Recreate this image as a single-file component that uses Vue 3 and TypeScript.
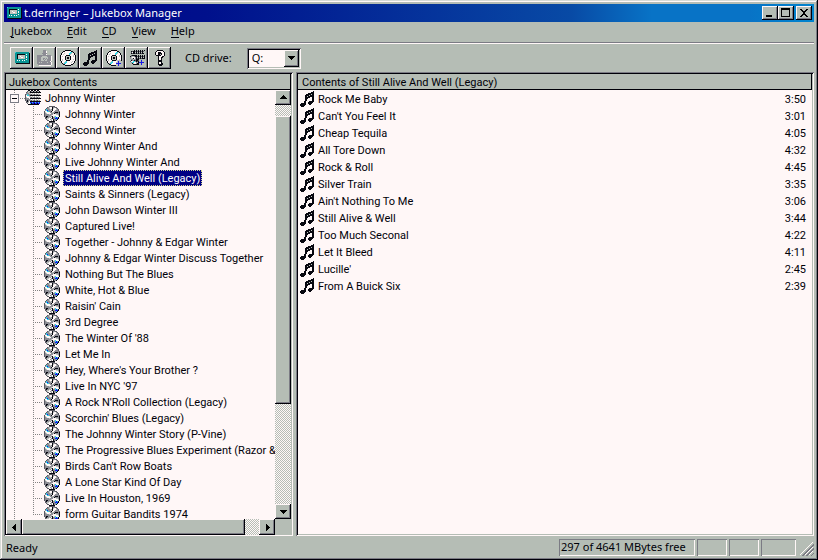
<script setup lang="ts">
import { ref } from 'vue'

interface Layer {
  color: string
  d: string
}

interface Track {
  title: string
  length: string
}

const palette: Record<string, string> = {
  k: '#080810',
  d: '#5a5a63',
  g: '#8c8c94',
  l: '#bdc3bd',
  w: '#fff7f7',
  c: '#31d6e7',
  t: '#089494',
  b: '#1818e7',
}

// Turns rows of palette letters into one path per colour.
function layers(rows: string[]): Layer[] {
  const paths: Record<string, string> = {}
  rows.forEach((row, y) => {
    Array.from(row).forEach((key, x) => {
      if (key !== '.') paths[key] = (paths[key] ?? '') + `M${x} ${y}h1v1h-1z`
    })
  })
  return Object.entries(paths).map(([key, d]) => ({ color: palette[key], d }))
}

const sprites: Record<string, Layer[]> = {
  player: layers([
    '................',
    '................',
    '.cttttttttttttt.',
    '.ttttttttttttttk',
    '.ttkkkkkkkktwttk',
    '.ttklllllllttttk',
    '.ttkllwlllltwttk',
    '.ttklllwwlltwttk',
    '.ttklllllllttttk',
    '.tttttttttttwttk',
    '.ttwtwttwtwttttk',
    '.ttttttttttttttk',
    '.ttttttttttttttk',
    '..kkkkkkkkkkkkkk',
    '................',
    '................',
  ]),
  load: layers([
    '......ggg.......',
    '......gggw......',
    '......gggw......',
    '.....ggggg......',
    '......gggw......',
    'gggggggggggggg..',
    'ggggglllllggggw.',
    'gggglllllllgggw.',
    'ggggllgglglgggw.',
    'ggggllglglggggw.',
    'gggglllgllggggw.',
    'gggggggggggggw..',
    'gglglggggglgggw.',
    'ggggggggggggggw.',
    '.gggggggggggggw.',
    '..wwwwwwwwwwww..',
  ]),
  cd: layers([
    '.....kkkkkk.....',
    '...kkwwwwwwkk...',
    '..kwwwwwwwcclk..',
    '.kwwlwwwwcclwwk.',
    '.kwlwwwwwclwwwk.',
    'kwwwwwkkkkwwwlwk',
    'kwlwwkllllkwwlwk',
    'kwwwwklkklkwwwwk',
    'kwwwwklkklkwwwwk',
    'kwlwwkllllkwwlwk',
    'kwlwwwkkkkwwwwwk',
    '.kwwwlcwwwwwlwk.',
    '.kwwlccwwwwlwwk.',
    '..klccwwwwwwwk..',
    '...kkwwwwwwkk...',
    '.....kkkkkk.....',
  ]),
  addCd: layers([
    '.....kkkkkk.....',
    '...kkwwwwwwkk...',
    '..kwwwwwwwcclk..',
    '.kwwlwwwwcclwwk.',
    '.kwlwwwwwclwwwk.',
    'kwwwwwkkkkwwwlwk',
    'kwlwwkllllkwwlwk',
    'kwwwwklkklkwwwwk',
    'kwwwwklkklkwwwwk',
    'kwlwwkllllkwwlwk',
    'kwlwwwkkkklllllk',
    '.kwwwlcwwwwlbll.',
    '.kwwlccwwwllbll.',
    '..klccwwwwbbbbb.',
    '...kkwwwwwllbll.',
    '.....kkkkkl.b...',
  ]),
  note: layers([
    '.............k..',
    '...........kkk..',
    '........kkkkkk..',
    '......kkkkklkk..',
    '.....kkkklkkkk..',
    '.....kklkkkkkk..',
    '.....kkkkk..kk..',
    '.....kkk....kk..',
    '.....kk.....kk..',
    '.....kk.....kk..',
    '....kk...kkkkk..',
    '....kk..kkkkk...',
    '.kkkkk..kkkk....',
    'kkkkkk...kk.....',
    'kkkkk...........',
    '.kkk............',
  ]),
  disc: layers([
    '.....dddddd.....',
    '...dglwwkggdd...',
    '..dgglwwklwwgd..',
    '.dcggglgkwwwlgd.',
    '.gcbggglkwwgggd.',
    'dwwccggkwwgggggd',
    'dlwwwwgglggkkkgk',
    'dglwwwwgglkggggk',
    'dgggglgggwwwllgk',
    'dgggggglwwwwwwlk',
    'dgkkgglgkwlcwwwk',
    '.dkgglgwkggcbck.',
    '.dgllwwgkggbbbk.',
    '..dlwwglwkggck..',
    '...ddwwgwkggk...',
    '.....kkkkkk.....',
  ]),
  changer: layers([
    '...kk.kk.kk.kk..',
    '..dllkglkglkglk.',
    '.dglgkkkkkkkkkkk',
    '.gggllwlwlwlwlw.',
    'dgcgggdlgdlgdlg.',
    'dwccgkkkkkkkkkkk',
    'dwwwllwlwlwlwlw.',
    'dlwwwgdlgdlgdlg.',
    'dgggwkkkkkkkkkkk',
    'dgggglwlwlwlwlw.',
    'dgkgggdlgdlgdlg.',
    '.dkgwkkkkkkkkkkk',
    '.dglwbbcbbcbbcb.',
    '..dwwckbbkbbkbb.',
    '...kkkkkkkkkkk..',
    '................',
  ]),
  addChanger: layers([
    '.....k.k.k.k.k.k',
    '..kdkkdkdkdkdkd.',
    '..dwkklklklklkl.',
    '..kdkkdkdkdkdkk.',
    '................',
    '..dkkkkk.k.k.k.k',
    '.kgllgkkdkdkdkdk',
    '.glwwwgklklklklk',
    '.gllkwgkdkdkdkkk',
    '..gglggkkk......',
    '..kggkdkkd..b...',
    '.dwwccgkdk..b...',
    '..gccwwglkbbbbb.',
    '...klwwgkk..b...',
    '....kkkkkk..b...',
    '................',
  ]),
  help: layers([
    '.....kkkkkk.....',
    '....kwwwwwwk....',
    '...kwwkkkwwwk...',
    '...kwwkkkkwwk...',
    '...kwwkk.kwwk...',
    '....kkkkkwwwk...',
    '......kwwwkk....',
    '......kwwkk.....',
    '......kwwk......',
    '......kwwk......',
    '......kkkk......',
    '......kkkk......',
    '......kwwk......',
    '......kwwkk.....',
    '......kkkkk.....',
    '.......kkk......',
  ]),
}

const menus = ['Jukebox', 'Edit', 'CD', 'View', 'Help']

const tools = [
  { sprite: 'player', label: 'Jukebox' },
  { sprite: 'load', label: 'Load disc' },
  { sprite: 'cd', label: 'Disc' },
  { sprite: 'note', label: 'Play track' },
  { sprite: 'addCd', label: 'Add disc' },
  { sprite: 'addChanger', label: 'Add group' },
  { sprite: 'help', label: 'About' },
]

const albums = [
  'Johnny Winter',
  'Second Winter',
  'Johnny Winter And',
  'Live Johnny Winter And',
  'Still Alive And Well (Legacy)',
  'Saints & Sinners (Legacy)',
  'John Dawson Winter III',
  'Captured Live!',
  'Together - Johnny & Edgar Winter',
  'Johnny & Edgar Winter Discuss Together',
  'Nothing But The Blues',
  'White, Hot & Blue',
  "Raisin' Cain",
  '3rd Degree',
  "The Winter Of '88",
  'Let Me In',
  "Hey, Where's Your Brother ?",
  "Live In NYC '97",
  "A Rock N'Roll Collection (Legacy)",
  "Scorchin' Blues (Legacy)",
  'The Johnny Winter Story (P-Vine)',
  'The Progressive Blues Experiment (Razor & Tie)',
  "Birds Can't Row Boats",
  'A Lone Star Kind Of Day',
  'Live In Houston, 1969',
  'form Guitar Bandits 1974',
]

const tracks: Track[] = [
  { title: 'Rock Me Baby', length: '3:50' },
  { title: "Can't You Feel It", length: '3:01' },
  { title: 'Cheap Tequila', length: '4:05' },
  { title: 'All Tore Down', length: '4:32' },
  { title: 'Rock & Roll', length: '4:45' },
  { title: 'Silver Train', length: '3:35' },
  { title: "Ain't Nothing To Me", length: '3:06' },
  { title: 'Still Alive & Well', length: '3:44' },
  { title: 'Too Much Seconal', length: '4:22' },
  { title: 'Let It Bleed', length: '4:11' },
  { title: "Lucille'", length: '2:45' },
  { title: 'From A Buick Six', length: '2:39' },
]

const selected = ref('Still Alive And Well (Legacy)')
const drive = ref('Q:')
</script>

<template>
  <div class="window">
    <svg class="defs" aria-hidden="true">
      <symbol v-for="(parts, name) in sprites" :id="name" :key="name" viewBox="0 0 16 16">
        <path v-for="part in parts" :key="part.color" :fill="part.color" :d="part.d" shape-rendering="crispEdges" />
      </symbol>
    </svg>

    <header class="titlebar">
      <svg class="icon" aria-hidden="true"><use href="#player" /></svg>
      <h1>t.derringer – Jukebox Manager</h1>
      <button class="raised caption" aria-label="Minimize">
        <svg viewBox="0 0 12 10"><path d="M2 7h6v2h-6z" /></svg>
      </button>
      <button class="raised caption" aria-label="Maximize">
        <svg viewBox="0 0 12 10"><path fill-rule="evenodd" d="M1 0h9v9h-9zM2 2v6h7v-6z" /></svg>
      </button>
      <button class="raised caption close" aria-label="Close">
        <svg viewBox="0 0 12 10"><path d="M2 1h2v1h1v1h2v-1h1v-1h2v1h-1v1h-1v1h-1v2h1v1h1v1h1v1h-2v-1h-1v-1h-2v1h-1v1h-2v-1h1v-1h1v-1h1v-2h-1v-1h-1v-1h-1z" /></svg>
      </button>
    </header>

    <nav class="menubar">
      <button v-for="menu in menus" :key="menu"><u>{{ menu[0] }}</u>{{ menu.slice(1) }}</button>
    </nav>

    <div class="toolbar">
      <div class="tools">
        <button v-for="tool in tools" :key="tool.sprite" class="raised tool" :aria-label="tool.label">
          <svg class="icon" aria-hidden="true"><use :href="`#${tool.sprite}`" /></svg>
        </button>
      </div>
      <label for="drive">CD drive:</label>
      <div class="combo">
        <select id="drive" v-model="drive">
          <option>Q:</option>
          <option>R:</option>
        </select>
        <span class="raised drop"><svg viewBox="0 0 7 4"><path d="M0 0h7v1h-1v1h-1v1h-1v1h-1v-1h-1v-1h-1v-1h-1z" /></svg></span>
      </div>
    </div>

    <main>
      <section class="pane contents">
        <h2>Jukebox Contents</h2>
        <div class="scroller">
          <ul class="tree">
            <li>
              <div class="root">
                <button class="toggle" aria-label="Collapse"></button>
                <svg class="icon" aria-hidden="true"><use href="#changer" /></svg>
                <span class="name">Johnny Winter</span>
              </div>
              <ul class="children">
                <li v-for="album in albums" :key="album" class="album">
                  <svg class="icon" aria-hidden="true"><use href="#disc" /></svg>
                  <button class="name" :class="{ selected: album === selected }" @click="selected = album">{{ album }}</button>
                </li>
              </ul>
            </li>
          </ul>
          <div class="track vertical">
            <button class="raised arrow" aria-label="Scroll up"><svg viewBox="0 0 7 7"><path d="M3 1h1v1h1v1h1v1h1v1h-7v-1h1v-1h1v-1h1z" /></svg></button>
            <span class="gap before"></span>
            <span class="raised thumb"></span>
            <span class="gap after"></span>
            <button class="raised arrow" aria-label="Scroll down"><svg viewBox="0 0 7 7"><path d="M0 2h7v1h-1v1h-1v1h-1v1h-1v-1h-1v-1h-1v-1h-1z" /></svg></button>
          </div>
          <div class="track horizontal">
            <button class="raised arrow" aria-label="Scroll left"><svg viewBox="0 0 7 7"><path d="M5 0v7h-1v-1h-1v-1h-1v-1h-1v-1h1v-1h1v-1h1v-1z" /></svg></button>
            <span class="raised thumb"></span>
            <span class="gap end"></span>
            <button class="raised arrow" aria-label="Scroll right"><svg viewBox="0 0 7 7"><path d="M2 0v7h1v-1h1v-1h1v-1h1v-1h-1v-1h-1v-1h-1v-1z" /></svg></button>
          </div>
        </div>
      </section>

      <section class="pane listing">
        <h2>Contents of {{ selected }}</h2>
        <table>
          <tbody>
            <tr v-for="track in tracks" :key="track.title">
              <td class="glyph"><svg class="icon" aria-hidden="true"><use href="#note" /></svg></td>
              <td>{{ track.title }}</td>
              <td class="length">{{ track.length }}</td>
            </tr>
          </tbody>
        </table>
      </section>
    </main>

    <footer class="status">
      <span class="message">Ready</span>
      <span class="cell space">297 of 4641 MBytes free</span>
      <span class="cell"></span>
      <span class="cell"></span>
      <span class="cell wide"></span>
      <svg class="grip" viewBox="0 0 14 14" aria-hidden="true">
        <path class="light" d="M0 13L13 0M5 13L13 5M9 13L13 9" />
        <path class="dark" d="M2 14L14 2M3 14L14 3M7 14L14 7M6 14L14 6M11 14L14 11" />
      </svg>
    </footer>
  </div>
</template>

<style>
body {
  margin: 0;
}
</style>

<style scoped>
.window {
  --face: #b5bdb5;
  --paper: #fff7f7;
  --shade: #7b7b84;
  --ink: #000008;
  --dotted: #848484;
  box-sizing: border-box;
  display: flex;
  flex-direction: column;
  height: 100vh;
  padding: 4px;
  background: var(--face);
  box-shadow: inset -1px -1px var(--ink), inset 1px 1px #d6dad6, inset -2px -2px var(--shade), inset 2px 2px var(--paper);
  color: var(--ink);
  font: 11px/16px Roboto, "Liberation Sans", sans-serif;
}

.defs {
  position: absolute;
  width: 0;
  height: 0;
}

h1,
h2,
ul {
  margin: 0;
  padding: 0;
  font-size: 11px;
  font-weight: 400;
  list-style: none;
}

button,
select {
  margin: 0;
  padding: 0;
  border: 0;
  background: none;
  color: inherit;
  font: inherit;
}

.icon {
  display: block;
  flex: none;
  width: 16px;
  height: 16px;
}

.raised {
  display: flex;
  flex: none;
  align-items: center;
  justify-content: center;
  box-sizing: border-box;
  background: var(--face);
  box-shadow: inset -1px -1px var(--ink), inset 1px 1px var(--paper), inset -2px -2px var(--shade);
}

.titlebar {
  display: flex;
  flex: none;
  align-items: center;
  height: 18px;
  padding: 0 2px;
  background: linear-gradient(90deg, #00008c 0%, #00108c 25%, #084aa5 70%, #0873c6 80%, #0873c6 92%, #0084ce 100%);
  color: #fff;
}

.titlebar h1 {
  flex: 1;
  margin-left: 2px;
  font-family: "Noto Sans", sans-serif;
}

.caption {
  width: 16px;
  height: 14px;
}

.caption svg {
  width: 12px;
  height: 10px;
}

.close {
  margin-left: 2px;
}

.menubar {
  display: flex;
  flex: none;
  gap: 1px;
  height: 20px;
  border-bottom: 1px solid var(--shade);
  box-shadow: 0 1px var(--paper);
  font-family: "Noto Sans", sans-serif;
}

.menubar button {
  padding: 0 7px 2px;
}

.menubar u {
  display: inline-block;
  border-bottom: 1px solid;
  line-height: 13px;
  text-decoration: none;
}

.toolbar {
  display: flex;
  flex: none;
  align-items: center;
  height: 22px;
  padding: 4px 6px 3px;
  font-family: "Noto Sans", sans-serif;
}

.tools {
  display: flex;
}

.tool {
  width: 23px;
  height: 22px;
}

.toolbar label {
  margin: 0 15px 0 14px;
}

.combo {
  display: grid;
  box-sizing: border-box;
  width: 54px;
  height: 21px;
  padding: 2px;
  background: var(--paper);
  box-shadow: inset 1px 1px var(--shade), inset -1px -1px var(--paper), inset 2px 2px var(--ink), inset -2px -2px var(--face);
}

.combo > * {
  grid-area: 1 / 1;
}

.combo select {
  appearance: none;
  padding-left: 3px;
}

.drop {
  justify-self: end;
  width: 15px;
  pointer-events: none;
}

.drop svg {
  width: 7px;
  height: 4px;
}

main {
  display: flex;
  flex: 1;
  gap: 3px;
  min-height: 0;
}

.pane {
  display: flex;
  flex-direction: column;
  box-sizing: border-box;
  padding: 1px 2px;
  background: var(--paper);
  box-shadow: inset 1px 1px var(--shade), inset -1px -1px var(--paper), inset 2px 2px var(--ink), inset -2px -2px var(--face);
}

.contents {
  flex: none;
  width: 289px;
}

.listing {
  flex: 1;
  min-width: 0;
}

.pane h2 {
  flex: none;
  box-sizing: border-box;
  height: 17px;
  padding: 1px 0 0 4px;
  border: 1px solid var(--ink);
  border-left: 0;
  background: var(--face);
  line-height: 15px;
}

.contents h2 {
  padding-left: 3px;
}

.scroller {
  display: grid;
  flex: 1;
  grid-template: minmax(0, 1fr) 16px / minmax(0, 1fr) 16px;
  min-height: 0;
  background: var(--face);
}

.tree {
  overflow: hidden;
  background: repeating-linear-gradient(var(--dotted) 0 1px, transparent 1px 2px) 8px 0 / 1px 100% no-repeat var(--paper);
}

.root,
.album {
  display: flex;
  align-items: center;
  height: 16px;
  white-space: nowrap;
}

.root {
  padding-left: 4px;
  background: repeating-linear-gradient(90deg, var(--dotted) 0 1px, transparent 1px 2px) 8px 8px / 12px 1px no-repeat;
}

.root .icon {
  margin-left: 6px;
}

.toggle {
  width: 9px;
  height: 9px;
  border: 1px solid var(--shade);
  background: linear-gradient(var(--ink), var(--ink)) center / 5px 1px no-repeat var(--paper);
}

.name {
  box-sizing: border-box;
  height: 16px;
  margin-left: 2px;
  padding: 1px 2px 0;
  line-height: 15px;
}

.children {
  background: repeating-linear-gradient(var(--dotted) 0 1px, transparent 1px 2px) 27px 0 / 1px calc(100% - 8px) no-repeat;
}

.album {
  padding-left: 38px;
  background: repeating-linear-gradient(90deg, var(--dotted) 0 1px, transparent 1px 2px) 27px 8px / 10px 1px no-repeat;
}

.album .name {
  margin-left: 3px;
}

.selected {
  background: #000084;
  color: #fff;
  outline: 1px dotted #d6d68c;
  outline-offset: -1px;
}

.track {
  display: flex;
}

.vertical {
  flex-direction: column;
}

.arrow {
  width: 16px;
  height: 15px;
}

.arrow svg {
  width: 7px;
  height: 7px;
}

.horizontal .arrow,
.horizontal .thumb {
  height: 16px;
}

.gap {
  background: repeating-conic-gradient(var(--face) 0 25%, var(--paper) 0 50%) 0 0 / 2px 2px;
}

.before {
  flex: 11;
}

.vertical .thumb {
  flex: 288;
}

.after {
  flex: 100;
}

.horizontal .thumb {
  flex: 223;
}

.end {
  flex: 14;
}

table {
  width: 100%;
  border-collapse: collapse;
}

td {
  height: 15px;
  padding: 2px 0 0;
  line-height: 15px;
}

.glyph {
  width: 20px;
  padding-top: 0;
}

.glyph .icon {
  margin-left: 2px;
}

.length {
  padding-right: 6px;
  text-align: right;
}

.status {
  display: flex;
  flex: none;
  align-items: center;
  gap: 2px;
  height: 17px;
  padding-top: 3px;
  font-family: "Noto Sans", sans-serif;
}

.message {
  flex: 1;
  padding-left: 2px;
}

.cell {
  box-sizing: border-box;
  width: 30px;
  height: 17px;
  padding-left: 2px;
  box-shadow: inset 1px 1px var(--shade), inset -1px -1px var(--paper);
  line-height: 16px;
  white-space: nowrap;
}

.space {
  width: 136px;
}

.wide {
  width: 35px;
}

.grip {
  width: 14px;
  height: 14px;
  margin-left: 2px;
  align-self: flex-end;
}

.grip path {
  fill: none;
  stroke: var(--shade);
}

.grip .light {
  stroke: var(--paper);
}
</style>
